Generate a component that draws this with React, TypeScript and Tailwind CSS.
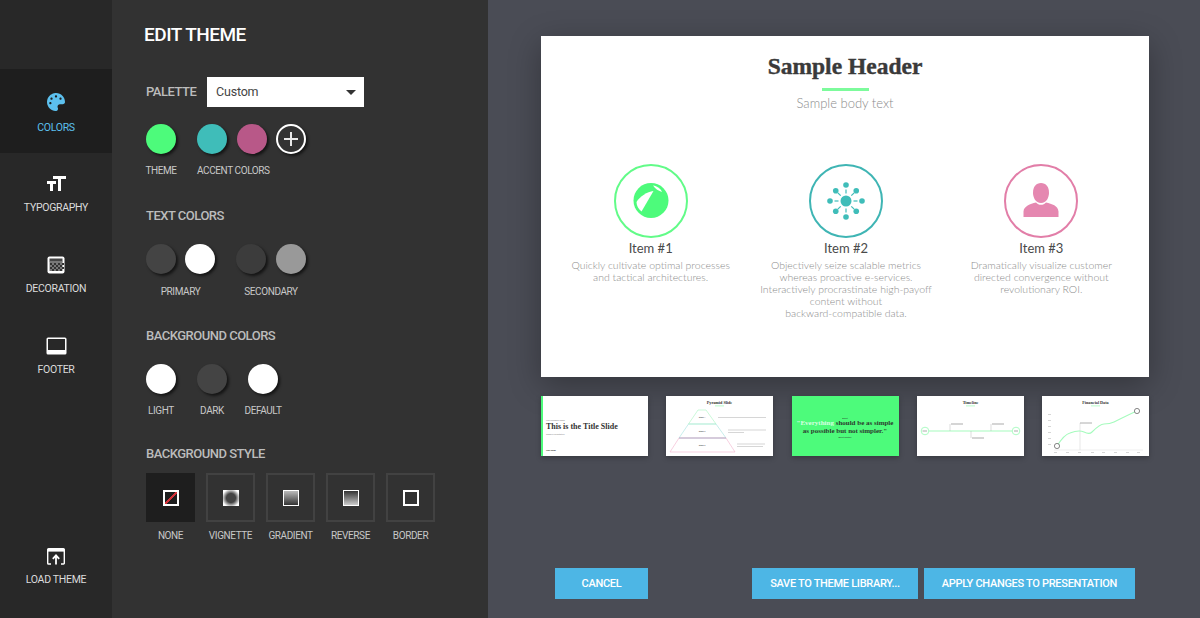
import { FaPalette } from "react-icons/fa";
import { MdFormatSize } from "react-icons/md";

const uiFont = "font-['Roboto',sans-serif]";
const slideFont = "font-['Lato',sans-serif]";
const headFont = "font-['Liberation_Serif',serif]";

function Decoration() {
  const cells = [];
  for (let r = 0; r < 4; r++) {
    for (let c = 0; c < 7; c++) {
      if ((r + c) % 2 === 0) cells.push(<rect key={`${r}-${c}`} x={3 + c * 2} y={7 + r * 2} width="2" height="2" fill="#333" />);
    }
  }
  return (
    <svg width="18" height="18" viewBox="0 0 18 18">
      <rect x="0.5" y="0.5" width="17" height="17" rx="2" fill="#fff" />
      <rect x="2.5" y="2.5" width="13" height="3" fill="#444" />
      <rect x="2.5" y="5" width="13" height="10" fill="#777" />
      {cells}
    </svg>
  );
}

function Footer() {
  return (
    <svg width="21" height="18" viewBox="0 0 21 18">
      <path d="M2 0.5h17a1.500 1.500 0 0 1 1.500 1.500v14a1.500 1.500 0 0 1-1.500 1.500H2A1.500 1.500 0 0 1 .5 16V2A1.500 1.500 0 0 1 2 .5z" fill="#fff" />
      <rect x="2" y="2" width="17" height="11" fill="#282828" />
    </svg>
  );
}

function LoadTheme() {
  return (
    <svg width="18" height="17" viewBox="0 0 18 17" fill="none">
      <path d="M4 16H1.500a.8.8 0 0 1-.8-.8V1.500A.8.8 0 0 1 1.500.7h15a.8.8 0 0 1 .8.8v13.700a.8.8 0 0 1-.8.8H14" stroke="#fff" strokeWidth="1.400" />
      <rect x="1" y="1" width="16" height="2.600" fill="#fff" />
      <path d="M9 16.500V8M5.800 10.800 9 7.400l3.200 3.400" stroke="#fff" strokeWidth="1.800" />
    </svg>
  );
}

function SideItem({ icon, label, active, className }: { icon: React.ReactNode; label: string; active?: boolean; className?: string }) {
  return (
    <div className={`flex flex-col items-center ${active ? "bg-[#1e1e1e] text-[#5cc0ee]" : "text-[#dcdcdc]"} ${className}`}>
      <div className="h-[18px] flex items-center justify-center">{icon}</div>
      <span className={`${active ? "mt-[10px]" : "mt-[8px]"} text-[10.500px] tracking-[-0.3px] leading-[14px]`}>{label}</span>
    </div>
  );
}

function Swatch({ color, className }: { color: string; className?: string }) {
  return <div className={`w-[30px] h-[30px] rounded-full shadow-[2px_2px_3px_rgba(0,0,0,0.6)] ${className}`} style={{ background: color }} />;
}

function Heading({ children, className }: { children: React.ReactNode; className?: string }) {
  return <h2 className={`text-[13px] tracking-[-0.5px] leading-[16px] font-medium text-[#bcbcbc] ${className}`}>{children}</h2>;
}

function Small({ children, className }: { children: React.ReactNode; className?: string }) {
  return <span className={`text-[10px] tracking-[-0.4px] leading-[14px] text-[#c8c8c8] text-center whitespace-nowrap ${className}`}>{children}</span>;
}

function StyleBox({ label, active, children }: { label: string; active?: boolean; children: React.ReactNode }) {
  return (
    <div className="w-[49px] flex flex-col items-center">
      <div className={`w-[49px] h-[49px] flex items-center justify-center ${active ? "bg-[#1e1e1e]" : "border-2 border-[#424242]"}`}>
        {children}
      </div>
      <Small className="mt-[7px]">{label}</Small>
    </div>
  );
}

function BeachBall() {
  return (
    <svg width="36" height="36" viewBox="0 0 36 36">
      <circle cx="18" cy="17.500" r="17.500" fill="#4dfb7b" />
      <path d="M3.500 19C7 13 14 9 20.500 8L8.500 28.500C5.500 26 3.500 23 3.500 19z" fill="#fff" />
      <path d="M20 2.500C24 3 28 6 29 9 26 8 22 6 20 2.500z" fill="#fff" />
    </svg>
  );
}

function NetworkIcon() {
  const spokes = [0, 45, 90, 135, 180, 225, 270, 315];
  return (
    <svg width="38" height="38" viewBox="-19 -19 38 38" fill="#3fbdb9" stroke="#3fbdb9">
      <circle r="5.500" stroke="none" />
      {spokes.map((a) => {
        const t = (a * Math.PI) / 180;
        const outer = a % 90 === 0 ? 16 : 14.500;
        return (
          <g key={a}>
            <line x1={Math.cos(t) * 7.500} y1={Math.sin(t) * 7.500} x2={Math.cos(t) * 11.500} y2={Math.sin(t) * 11.500} strokeWidth="1.200" />
            <circle cx={Math.cos(t) * outer} cy={Math.sin(t) * outer} r="2.800" stroke="none" />
          </g>
        );
      })}
    </svg>
  );
}

function PersonIcon() {
  return (
    <svg width="36" height="36" viewBox="0 0 36 36" fill="#e587b0">
      <path d="M18 0c5 0 8 4 8 9.500 0 5-2.500 10.500-8 10.500s-8-5.500-8-10.500C10 4 13 0 18 0z" />
      <path d="M13 19.500c1.500 1.500 3 2.300 5 2.300s3.500-.8 5-2.300c6 1.500 12 3 12.500 9V34H.5v-5.500c.5-5.500 6.500-7.500 12.500-9z" />
    </svg>
  );
}

function SlideItem({ color, icon, title, lines }: { color: string; icon: React.ReactNode; title: string; lines: string[] }) {
  return (
    <div className="flex flex-col items-center">
      <div className={`w-[74px] h-[74px] rounded-full border-[2.500px] flex items-center justify-center ${color}`}>{icon}</div>
      <div className="mt-[1px] text-[13px] leading-[18px] text-[#4a4a4a]">{title}</div>
      <div className="mt-[2px] text-[10.500px] leading-[12.100px] font-light text-[#8c8c8c] text-center whitespace-nowrap">
        {lines.map((l) => (
          <div key={l}>{l}</div>
        ))}
      </div>
    </div>
  );
}

function Thumb({ children, className }: { children: React.ReactNode; className?: string }) {
  return <div className={`w-[107px] h-[60px] shadow-[0_2px_5px_rgba(0,0,0,0.25)] overflow-hidden ${className}`}>{children}</div>;
}

function PyramidThumb() {
  return (
    <svg viewBox="0 0 107 60" width="107" height="60">
      <rect width="107" height="60" fill="#fff" />
      <text x="53.500" y="7.500" fontSize="4.200" fontWeight="700" textAnchor="middle" fill="#333" fontFamily="Liberation Serif">Pyramid Slide</text>
      <rect x="49" y="9.500" width="9" height="0.800" fill="#a5fbbd" />
      <path d="M32 14H40L50 28H22.500z" fill="none" stroke="#b4f7c8" strokeWidth="0.700" />
      <path d="M22.500 28H50L60 42H13z" fill="none" stroke="#a3e3df" strokeWidth="0.600" />
      <path d="M13 42H60L69 56H4z" fill="none" stroke="#f4bcd3" strokeWidth="0.700" />
      <line x1="13" y1="42" x2="60" y2="42" stroke="#b8a8c8" strokeWidth="0.800" />
      <text x="36" y="22" fontSize="2" textAnchor="middle" fill="#333">Stage 1</text>
      <text x="36" y="36" fontSize="2" textAnchor="middle" fill="#333">Stage 2</text>
      <text x="36" y="50" fontSize="2" textAnchor="middle" fill="#333">Stage 3</text>
      <g stroke="#bbb" strokeWidth="0.600">
        <line x1="52" y1="21.500" x2="100" y2="21.500" />
        <line x1="62" y1="34" x2="100" y2="34" />
        <line x1="62" y1="36.500" x2="78" y2="36.500" />
        <line x1="71" y1="48" x2="99" y2="48" />
        <line x1="71" y1="50.500" x2="97" y2="50.500" />
      </g>
    </svg>
  );
}

function TimelineThumb() {
  return (
    <svg viewBox="0 0 107 60" width="107" height="60">
      <rect width="107" height="60" fill="#fff" />
      <text x="53.500" y="7.500" fontSize="4.200" fontWeight="700" textAnchor="middle" fill="#333" fontFamily="Liberation Serif">Timeline</text>
      <rect x="49" y="9.500" width="9" height="0.800" fill="#a5fbbd" />
      <line x1="12" y1="35" x2="96" y2="35" stroke="#a5fbbd" strokeWidth="1" />
      <circle cx="8" cy="35" r="3.800" fill="#fff" stroke="#a5fbbd" strokeWidth="0.900" />
      <circle cx="99" cy="35" r="3.800" fill="#fff" stroke="#a5fbbd" strokeWidth="0.900" />
      <g stroke="#aaa" strokeWidth="0.400" fill="none">
        <path d="M33 35V28" />
        <path d="M54 35V42" />
        <path d="M74 35V28" />
      </g>
      <g stroke="#888" strokeWidth="0.700">
        <line x1="34" y1="28" x2="46" y2="28" />
        <line x1="55" y1="42" x2="67" y2="42" />
        <line x1="75" y1="28" x2="87" y2="28" />
        <line x1="5.500" y1="35" x2="10" y2="35" />
        <line x1="97" y1="35" x2="101" y2="35" />
      </g>
    </svg>
  );
}

function FinancialThumb() {
  return (
    <svg viewBox="0 0 107 60" width="107" height="60">
      <rect width="107" height="60" fill="#fff" />
      <text x="53.500" y="7.500" fontSize="4.200" fontWeight="700" textAnchor="middle" fill="#333" fontFamily="Liberation Serif">Financial Data</text>
      <rect x="49" y="9.500" width="9" height="0.800" fill="#a5fbbd" />
      <line x1="38" y1="27" x2="38" y2="54" stroke="#ccc" strokeWidth="0.500" />
      <line x1="38" y1="27" x2="50" y2="27" stroke="#999" strokeWidth="0.800" />
      <line x1="12" y1="54" x2="101" y2="54" stroke="#ddd" strokeWidth="0.500" />
      <path d="M15 50 C20 42 24 38 28 37 C33 35 38 34 42 36 C46 38 48 38 50 36 C54 32 58 28 62 28 C66 28 70 27 72 26 C80 22 88 18 95 15" fill="none" stroke="#a5fbbd" strokeWidth="1.100" />
      <circle cx="15" cy="50" r="2.600" fill="#fff" stroke="#555" strokeWidth="0.700" />
      <circle cx="95" cy="15" r="2.600" fill="#fff" stroke="#555" strokeWidth="0.700" />
      <g fill="#bbb">
        {[18, 24, 30, 36, 42, 48].map((y) => (
          <rect key={y} x="6" y={y} width="3" height="0.600" />
        ))}
        {[12, 24, 36, 49, 60, 72, 84, 95].map((x) => (
          <rect key={x} x={x} y="56" width="3" height="0.600" />
        ))}
      </g>
    </svg>
  );
}

export default function App() {
  return (
    <div className={`flex w-[1200px] h-[618px] overflow-hidden ${uiFont}`}>
      {/* Sidebar */}
      <aside className="w-[112px] shrink-0 bg-[#282828] flex flex-col pt-[69px] pb-[31px]">
        <SideItem active className="h-[84px] pt-[24px]" icon={<FaPalette size={18} color="#5cc0ee" />} label="COLORS" />
        <SideItem className="h-[81px] pt-[22px]" icon={<MdFormatSize size={24} color="#fff" />} label="TYPOGRAPHY" />
        <SideItem className="h-[81px] pt-[22px]" icon={<Decoration />} label="DECORATION" />
        <SideItem className="h-[81px] pt-[22px]" icon={<Footer />} label="FOOTER" />
        <SideItem className="mt-auto" icon={<LoadTheme />} label="LOAD THEME" />
      </aside>

      {/* Edit panel */}
      <section className="w-[376px] shrink-0 bg-[#323232] pl-[34px] pt-[22px] flex flex-col">
        <h1 className="-ml-[2px] text-[19px] tracking-[-0.5px] leading-[26px] font-medium text-white">EDIT THEME</h1>

        <div className="mt-[29px] flex items-center">
          <Heading className="w-[61px]">PALETTE</Heading>
          <div className="w-[157px] h-[30px] bg-white flex items-center justify-between pl-[9px] pr-[8px] text-[12.500px] tracking-[-0.2px] text-[#444]">
            Custom
            <span className="w-0 h-0 border-x-[5px] border-x-transparent border-t-[5px] border-t-[#333]" />
          </div>
        </div>

        <div className="mt-[17px] flex">
          <div className="w-[51px] flex flex-col">
            <Swatch color="#4dfb7b" />
            <Small className="mt-[10px] w-[30px] flex justify-center">THEME</Small>
          </div>
          <div className="flex flex-col">
            <div className="flex gap-[9.500px]">
              <Swatch color="#3fbdb9" />
              <Swatch color="#b85888" />
              <div className="w-[30px] h-[30px] rounded-full border-2 border-white flex items-center justify-center shadow-[2px_2px_3px_rgba(0,0,0,0.6)]">
                <svg width="16" height="16" viewBox="0 0 16 16"><path d="M8 1v14M1 8h14" stroke="#e8e8e8" strokeWidth="2" /></svg>
              </div>
            </div>
            <Small className="mt-[10px] text-left">ACCENT COLORS</Small>
          </div>
        </div>

        <Heading className="mt-[30px]">TEXT COLORS</Heading>
        <div className="mt-[20px] flex gap-[21px]">
          <div className="flex flex-col items-center">
            <div className="flex gap-[9px]">
              <Swatch color="#444444" />
              <Swatch color="#ffffff" />
            </div>
            <Small className="mt-[11px]">PRIMARY</Small>
          </div>
          <div className="flex flex-col items-center">
            <div className="flex gap-[10px]">
              <Swatch color="#3c3c3c" />
              <Swatch color="#999999" />
            </div>
            <Small className="mt-[11px]">SECONDARY</Small>
          </div>
        </div>

        <Heading className="mt-[29px]">BACKGROUND COLORS</Heading>
        <div className="mt-[20px] flex gap-[21px]">
          {[
            ["LIGHT", "#ffffff"],
            ["DARK", "#444444"],
            ["DEFAULT", "#ffffff"],
          ].map(([label, color]) => (
            <div key={label} className="w-[30px] flex flex-col items-center">
              <Swatch color={color} />
              <Small className="mt-[10px]">{label}</Small>
            </div>
          ))}
        </div>

        <Heading className="mt-[28px]">BACKGROUND STYLE</Heading>
        <div className="mt-[11px] flex gap-[11px]">
          <StyleBox label="NONE" active>
            <div className="w-4 h-4 border-2 border-white bg-[linear-gradient(to_top_left,transparent_44%,#d3323a_44%,#d3323a_56%,transparent_56%)]" />
          </StyleBox>
          <StyleBox label="VIGNETTE">
            <div className="w-4 h-4 bg-[radial-gradient(circle,#444_40%,#fff_80%)]" />
          </StyleBox>
          <StyleBox label="GRADIENT">
            <div className="w-4 h-4 border border-white bg-[linear-gradient(to_bottom,#bbb,#333)]" />
          </StyleBox>
          <StyleBox label="REVERSE">
            <div className="w-4 h-4 border border-white bg-[linear-gradient(to_bottom,#333,#ccc)]" />
          </StyleBox>
          <StyleBox label="BORDER">
            <div className="w-4 h-4 border-2 border-white" />
          </StyleBox>
        </div>
      </section>

      {/* Preview */}
      <main className="flex-1 bg-[#4a4c55] pl-[53px] pr-[51px] pt-[36px] flex flex-col">
        <div className={`h-[341px] bg-white shadow-[0_8px_30px_rgba(0,0,0,0.3)] flex flex-col items-center pt-[13px] ${slideFont}`}>
          <h2 className={`text-[23.500px] leading-[34px] font-bold text-[#3a3a3a] [-webkit-text-stroke:0.4px_#3a3a3a] ${headFont}`}>Sample Header</h2>
          <div className="mt-[5px] w-[47px] h-[3px] bg-[#7dfb9c]" />
          <p className="mt-[3px] text-[13px] leading-[18px] font-light text-[#8c8c8c]">Sample body text</p>
          <div className="mt-[52px] w-full pl-[12px] pr-[10px] grid grid-cols-3">
            <SlideItem
              color="border-[#62fb88]"
              icon={<BeachBall />}
              title="Item #1"
              lines={["Quickly cultivate optimal processes", "and tactical architectures."]}
            />
            <SlideItem
              color="border-[#3fb5b4]"
              icon={<NetworkIcon />}
              title="Item #2"
              lines={[
                "Objectively seize scalable metrics",
                "whereas proactive e-services.",
                "Interactively procrastinate high-payoff",
                "content without",
                "backward-compatible data.",
              ]}
            />
            <SlideItem
              color="border-[#e27ea8]"
              icon={<PersonIcon />}
              title="Item #3"
              lines={["Dramatically visualize customer", "directed convergence without", "revolutionary ROI."]}
            />
          </div>
        </div>

        <div className="mt-[19px] flex justify-between">
          <Thumb className="bg-white border-l-2 border-l-[#4dfb7b] pl-[3px] pt-[23px]">
            <div className="text-[2px] leading-[3px] text-[#888]">Your Company Name</div>
            <div className={`text-[8px] leading-[10px] font-bold text-[#333] whitespace-nowrap ${headFont}`}>This is the Title Slide</div>
            <div className="mt-[1px] text-[2px] leading-[3px] text-[#888]">Sample Presentation</div>
            <div className="mt-[13px] text-[2px] leading-[3px] font-bold text-[#333]">Your Name</div>
          </Thumb>
          <Thumb><PyramidThumb /></Thumb>
          <Thumb className="bg-[#4dfb7b] flex flex-col items-center pt-[21px]">
            <div className="text-[2px] leading-[3px] text-[#2c3a2e]">Albert</div>
            <div className={`text-[7px] leading-[7.500px] font-bold text-center text-[#2c3a2e] whitespace-nowrap ${headFont}`}>
              <span className="text-[#d8ffe2]">"Everything</span> should be as simple
              <br />
              as possible but not simpler."
            </div>
            <div className="mt-[1px] text-[2px] leading-[3px] text-[#2c3a2e]">Albert Einstein</div>
          </Thumb>
          <Thumb><TimelineThumb /></Thumb>
          <Thumb><FinancialThumb /></Thumb>
        </div>

        <div className="mt-[112px] pl-[14px] pr-[14px] flex items-center text-[11px] tracking-[-0.3px] font-medium text-white">
          <button className="w-[93px] h-[31px] pt-[2px] bg-[#4db6e5]">CANCEL</button>
          <button className="ml-auto w-[166px] h-[31px] pt-[2px] bg-[#4db6e5]">SAVE TO THEME LIBRARY...</button>
          <button className="ml-[6px] w-[211px] h-[31px] pt-[2px] bg-[#4db6e5]">APPLY CHANGES TO PRESENTATION</button>
        </div>
      </main>
    </div>
  );
}
